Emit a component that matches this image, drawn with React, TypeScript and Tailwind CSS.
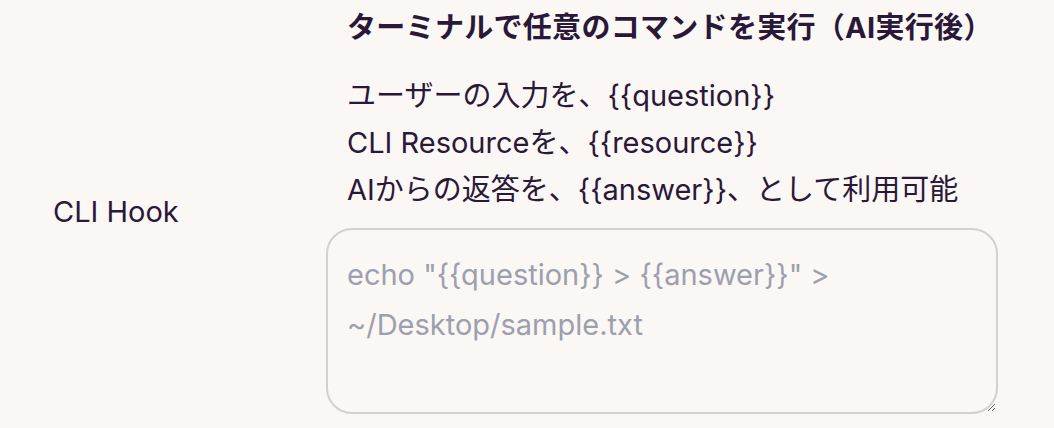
import React from "react";

export default function App() {
  const lines = [
    "ユーザーの入力を、{{question}}",
    "CLI Resourceを、{{resource}}",
    "AIからの返答を、{{answer}}、として利用可能",
  ];

  return (
    <div
      className="min-h-screen w-full bg-[#faf7f5] text-[#2a1838] flex"
      style={{ fontFamily: 'Inter, "Noto Sans CJK JP", sans-serif' }}
    >
      <div className="w-[326px] shrink-0 flex items-center pl-[53px] pb-[6px]">
        <span className="text-[29px] leading-[47px]">CLI Hook</span>
      </div>

      <div className="flex flex-col w-[672px] pt-[4px]">
        <h3 className="pl-[21px] text-[29px] font-bold leading-[47px] tracking-[0.3px] whitespace-nowrap">
          ターミナルで任意のコマンドを実行（AI実行後）
        </h3>

        <div className="pl-[21px] mt-[21px] flex flex-col">
          {lines.map((l) => (
            <p key={l} className="text-[29px] leading-[47px]">
              {l}
            </p>
          ))}
        </div>

        <textarea
          className="mt-[15px] h-[186px] w-full rounded-[26px] border-2 border-[#d3d0d0] bg-[#faf7f5] px-[19px] py-[20px] text-[29px] leading-[50px] placeholder:text-[#9ca0ad] outline-none"
          placeholder={'echo "{{question}} > {{answer}}" > ~/Desktop/sample.txt'}
        />
      </div>
    </div>
  );
}
